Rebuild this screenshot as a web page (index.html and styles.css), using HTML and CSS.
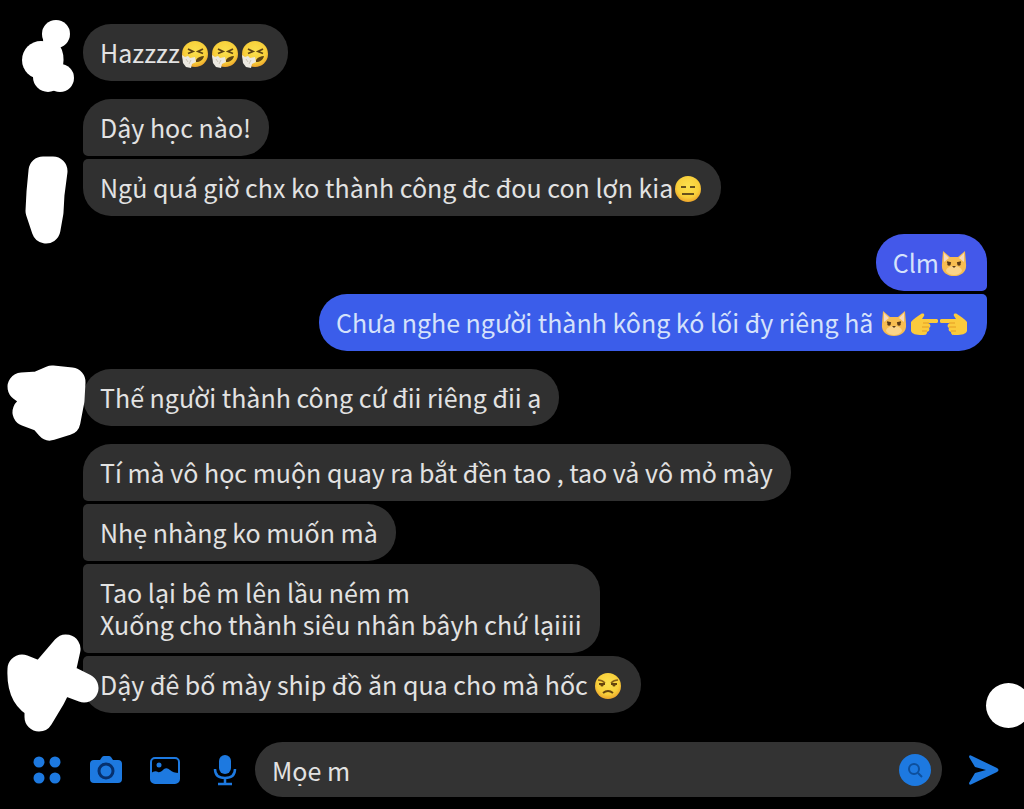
FILE: index.html
```html
<!DOCTYPE html>
<html lang="vi">
<head>
    <meta charset="UTF-8">
    <meta name="viewport" content="width=device-width, initial-scale=1.0">
    <title>Tin nhắn</title>
    <link rel="stylesheet" href="styles.css">
</head>
<body>
    <!-- shared emoji shapes -->
    <svg class="defs" aria-hidden="true">
        <defs>
            <radialGradient id="face" cx="50%" cy="40%" r="60%">
                <stop offset="0" stop-color="#fbe04e"/>
                <stop offset="0.7" stop-color="#f8cf3a"/>
                <stop offset="1" stop-color="#eda52c"/>
            </radialGradient>
            <symbol id="sneeze" viewBox="0 0 28 28">
                <circle cx="14" cy="14" r="13" fill="url(#face)"/>
                <path d="M7 9l5 2.5-5 2M22 9l-5 2.5 5 2" fill="none" stroke="#5d4314" stroke-width="1.8"/>
                <path d="M15 20c2-3 5-4 8-4-1 4-4 6-8 6z" fill="#5d4314"/>
                <path d="M1 15l3 2 3-1 2 2 5-1 1 5-4 2-1 4-5-1-3-4z" fill="#ece9e1"/>
                <path d="M5 19l2 3M10 20l-2 4" stroke="#c9c3b5" fill="none"/>
            </symbol>
            <symbol id="flat" viewBox="0 0 28 28">
                <circle cx="14" cy="14" r="13" fill="url(#face)"/>
                <path d="M7 12h5M16 12h5M8 19h12" stroke="#66501c" stroke-width="2" fill="none"/>
            </symbol>
            <symbol id="unamused" viewBox="0 0 28 28">
                <circle cx="14" cy="14" r="13" fill="url(#face)"/>
                <path d="M4 8q4 0 7 3M17 11q3-3 7-3" stroke="#8a6218" stroke-width="1.6" fill="none"/>
                <path d="M5 12h6M17 12h6M9 21q5-4 10 0" stroke="#66450f" stroke-width="2" fill="none"/>
                <circle cx="8" cy="13" r="1.6" fill="#66450f"/>
                <circle cx="20" cy="13" r="1.6" fill="#66450f"/>
            </symbol>
            <symbol id="cat" viewBox="0 0 28 28">
                <path d="M3 1l7 6h8l7-6 1 13c1 8-5 12-12 12S1 22 2 14z" fill="#f7bd51"/>
                <path d="M4 3l5 5-5 4zM24 3l-5 5 5 4z" fill="#f6d9bb"/>
                <path d="M14 16c4 0 8 2 8 5-2 3-5 4-8 4s-6-1-8-4c0-3 4-5 8-5z" fill="#fbd48a"/>
                <path d="M7 12l4 1M21 12l-4 1" stroke="#5c3a17" stroke-width="1.3" fill="none"/>
                <circle cx="9" cy="14" r="1.8" fill="#5c3a17"/>
                <circle cx="19" cy="14" r="1.8" fill="#5c3a17"/>
                <path d="M12 16h4l-2 2z" fill="#5c3a17"/>
            </symbol>
            <symbol id="point" viewBox="0 0 28 28">
                <path d="M1 12c2-3 6-5 10-8 2-1 4 0 3 2l-2 3h14c3 0 3 4 0 4h-8c3 1 3 4 1 5 1 2 0 3-2 4 0 3-2 3-5 3-6 0-10-1-11-4z" fill="#fbcb3d"/>
                <path d="M13 13h6M12 17h7M12 21h5" stroke="#e59d25" stroke-width="1" fill="none"/>
            </symbol>
        </defs>
    </svg>

    <main class="chat">
        <section class="group">
            <p class="bubble">Hazzzz<svg class="emoji" role="img" aria-label="hắt hơi"><use href="#sneeze"/></svg><svg class="emoji" role="img" aria-label="hắt hơi"><use href="#sneeze"/></svg><svg class="emoji" role="img" aria-label="hắt hơi"><use href="#sneeze"/></svg></p>
            <svg class="avatar" viewBox="0 -1 100 110" aria-hidden="true">
                <circle cx="56" cy="34" r="14"/>
                <circle cx="41" cy="60" r="19"/>
                <circle cx="48" cy="77" r="15"/>
                <circle cx="60" cy="78" r="14"/>
                <path d="M43 36L60 46Q65 54 63 66L66 72 44 74z"/>
            </svg>
        </section>

        <section class="group">
            <p class="bubble first">Dậy học nào!</p>
            <p class="bubble last">Ngủ quá giờ chx ko thành công đc đou con lợn kia<svg class="emoji" role="img" aria-label="mặt vô cảm"><use href="#flat"/></svg></p>
            <svg class="avatar" viewBox="0 134 100 110" aria-hidden="true">
                <path class="stroke" d="M43 171L53 171L50 194L49 212L46 229L40 211L41 192z"/>
            </svg>
        </section>

        <section class="group sent">
            <p class="bubble first">Clm<svg class="emoji" role="img" aria-label="mèo"><use href="#cat"/></svg></p>
            <p class="bubble last">Chưa nghe người thành kông kó lối đy riêng hã <svg class="emoji" role="img" aria-label="mèo"><use href="#cat"/></svg><svg class="emoji" role="img" aria-label="chỉ phải"><use href="#point"/></svg><svg class="emoji" role="img" aria-label="chỉ trái" viewBox="0 0 28 28"><use href="#point" width="28" height="28" transform="matrix(-1 0 0 1 28 0)"/></svg></p>
        </section>

        <section class="group">
            <p class="bubble">Thế người thành công cứ đii riêng đii ạ</p>
            <svg class="avatar" viewBox="0 344 100 110" aria-hidden="true">
                <path class="stroke" d="M22 387L38 386L52 380L71 382L70 400L66 421L50 426L43 418L27 412L40 400z"/>
            </svg>
        </section>

        <section class="group">
            <p class="bubble first">Tí mà vô học muộn quay ra bắt đền tao , tao vả vô mỏ mày</p>
            <p class="bubble middle">Nhẹ nhàng ko muốn mà</p>
            <p class="bubble middle">Tao lại bê m lên lầu ném m<br>Xuống cho thành siêu nhân bâyh chứ lạiiii</p>
            <p class="bubble last">Dậy đê bố mày ship đồ ăn qua cho mà hốc <svg class="emoji" role="img" aria-label="khó chịu"><use href="#unamused"/></svg></p>
            <svg class="avatar" viewBox="0 630 100 110" aria-hidden="true">
                <path class="stroke" d="M66 648L42 676L22 668C21 686 26 698 39 704V716L51 696L60 678L84 687L60 675z"/>
            </svg>
            <span class="dot"></span>
        </section>
    </main>

    <form class="composer" action="javascript:void(0);">
        <button type="button" class="tool" aria-label="Thêm">
            <svg viewBox="0 0 34 34"><circle cx="9" cy="9" r="5.5"/><circle cx="25" cy="9" r="5.5"/><circle cx="9" cy="25" r="5.5"/><circle cx="25" cy="25" r="5.5"/></svg>
        </button>
        <button type="button" class="tool" aria-label="Máy ảnh">
            <svg viewBox="0 0 34 34"><path d="M11 7l2-3q1-1 2-1h5q1 0 2 1l2 3h5q4 0 4 4v15q0 4-4 4H5q-4 0-4-4V11q0-4 4-4z"/><circle cx="17" cy="18" r="7" fill="none" stroke="#06306e" stroke-width="3"/></svg>
        </button>
        <button type="button" class="tool" aria-label="Ảnh">
            <svg viewBox="0 0 34 34"><rect x="3" y="5" width="28" height="25" rx="4" fill="none" stroke="#1d79e0" stroke-width="2"/><circle cx="11" cy="12" r="2.5"/><path d="M3 20q4-3 7-1 2 1 6-3 3-2 6 1 3 3 9 3v6q0 4-4 4H7q-4 0-4-4z"/></svg>
        </button>
        <button type="button" class="tool" aria-label="Ghi âm">
            <svg viewBox="0 0 34 34"><rect x="12" y="2" width="12" height="19" rx="6"/><path d="M8 16q0 9 10 9t10-9M18 25v6M11 31h14" fill="none" stroke="#1d79e0" stroke-width="2.5"/></svg>
        </button>
        <div class="field">
            <input type="text" value="Mọe m" aria-label="Tin nhắn">
            <button type="button" class="search" aria-label="Tìm">
                <svg viewBox="0 0 32 32"><circle cx="15" cy="15" r="5" fill="none" stroke="#0d4f9c" stroke-width="2"/><path d="M19 19l4 4" stroke="#0d4f9c" stroke-width="2"/></svg>
            </button>
        </div>
        <button type="submit" class="tool" aria-label="Gửi">
            <svg viewBox="0 0 34 34"><path d="M2 4q0-3 3-1l25 12q3 2 0 4L5 31q-3 2-3-1l6-10 11-3-11-3z"/></svg>
        </button>
    </form>
</body>
</html>
```
FILE: styles.css
```css
* {
    box-sizing: border-box;
}

body {
    margin: 0;
    background-color: #000;
    color: #e2e2e2;
    font-family: "Noto Sans CJK SC", "Noto Sans", sans-serif;
    font-size: 25px;
    line-height: 32px;
    overflow-x: hidden;
}

.defs {
    position: absolute;
    width: 0;
    height: 0;
}

.chat {
    display: flex;
    flex-direction: column;
    gap: 18px;
    padding-top: 24px;
}

.group {
    position: relative;
    display: flex;
    flex-direction: column;
    align-items: flex-start;
    gap: 3px;
    padding: 0 37px 0 83px;
}

.sent {
    align-items: flex-end;
}

.bubble {
    margin: 0;
    padding: 12px 18px 13px 17px;
    border-radius: 28px;
    background-color: #303030;
}

.first {
    border-bottom-left-radius: 5px;
}

.middle {
    border-top-left-radius: 5px;
    border-bottom-left-radius: 5px;
}

.last {
    border-top-left-radius: 5px;
}

.sent .bubble {
    background-color: #3b5dea;
    color: #d5e2fb;
}

.sent .first {
    border-radius: 28px 28px 5px 28px;
    background-color: #4358ea;
}

.sent .last {
    border-radius: 28px 5px 28px 28px;
}

.emoji {
    width: 28px;
    height: 28px;
    margin: -3px 1px;
    vertical-align: -2px;
}

/* painted over the profile pictures */
.avatar {
    position: absolute;
    left: 0;
    bottom: -28px;
    width: 100px;
    height: 110px;
    fill: #fff;
}

.stroke {
    stroke: #fff;
    stroke-width: 29px;
    stroke-linejoin: round;
}

.dot {
    position: absolute;
    right: -7px;
    bottom: -15px;
    width: 45px;
    height: 45px;
    border-radius: 50%;
    background-color: #fff;
}

.composer {
    display: flex;
    align-items: center;
    gap: 25px;
    margin-top: 29px;
    padding: 0 23px 12px 30px;
}

.tool {
    flex: none;
    width: 34px;
    height: 34px;
    padding: 0;
    border: none;
    background: none;
    cursor: pointer;
}

.tool svg,
.search svg {
    display: block;
    width: 100%;
    height: 100%;
    fill: #1d79e0;
}

.field {
    flex: 1;
    display: flex;
    align-items: center;
    min-width: 0;
    height: 55px;
    margin-left: -11px;
    padding: 0 11px 0 17px;
    border-radius: 28px;
    background-color: #333;
}

.field input {
    flex: 1;
    min-width: 0;
    padding: 0;
    border: none;
    outline: none;
    background: none;
    color: #e2e2e2;
    font: inherit;
}

.search {
    width: 32px;
    height: 32px;
    padding: 0;
    border: none;
    border-radius: 50%;
    background-color: #1d79e0;
    cursor: pointer;
}
```
